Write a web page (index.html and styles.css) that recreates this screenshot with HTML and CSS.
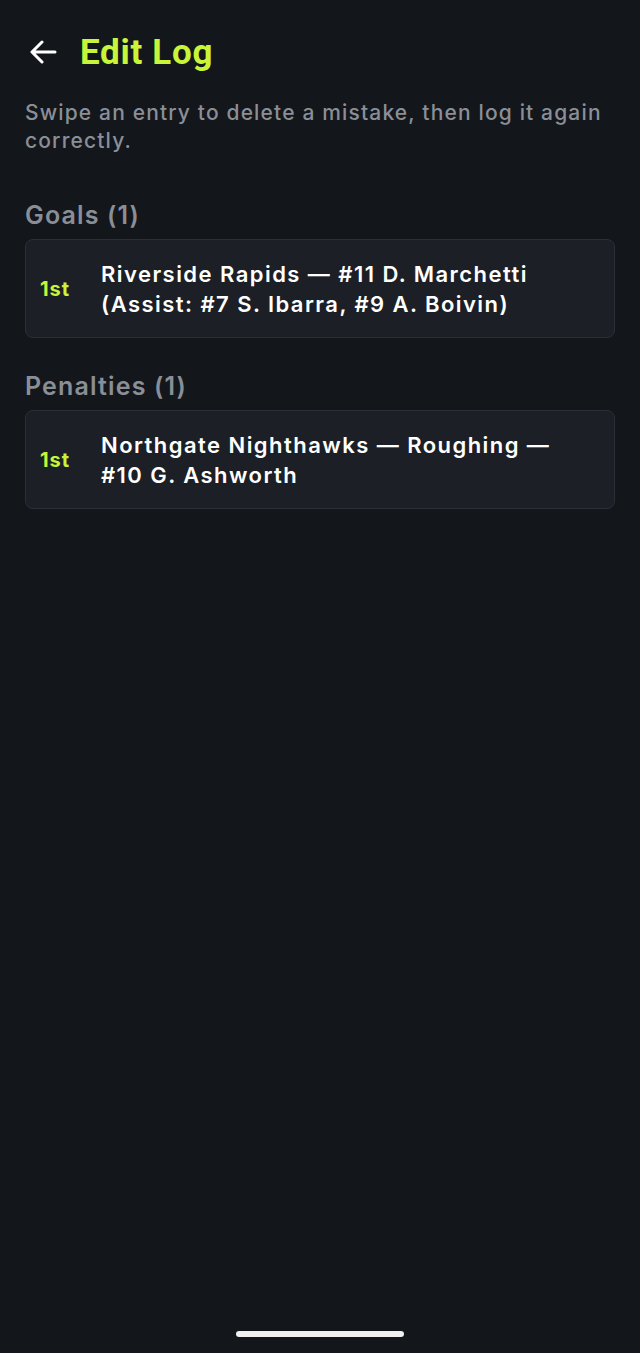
FILE: index.html
```html
<!DOCTYPE html>
<html lang="en">
<head>
<meta charset="utf-8">
<link rel="stylesheet" href="styles.css">
</head>
<body>
<div class="screen">
  <header class="topbar">
    <svg class="back" width="28" height="24" viewBox="0 0 28 24" aria-hidden="true">
      <path d="M26 12H3M13 2L3 12l10 10" fill="none" stroke="#ffffff" stroke-width="3" stroke-linecap="round" stroke-linejoin="round"/>
    </svg>
    <h1 class="title">Edit Log</h1>
  </header>
  <p class="hint">Swipe an entry to delete a mistake, then log it again correctly.</p>

  <section class="group">
    <h2 class="group-title">Goals (1)</h2>
    <div class="card">
      <span class="period">1st</span>
      <span class="entry">Riverside Rapids — #11 D. Marchetti (Assist: #7 S. Ibarra, #9 A. Boivin)</span>
    </div>
  </section>

  <section class="group">
    <h2 class="group-title">Penalties (1)</h2>
    <div class="card">
      <span class="period">1st</span>
      <span class="entry">Northgate Nighthawks — Roughing — #10 G. Ashworth</span>
    </div>
  </section>

  <div class="spacer"></div>
  <div class="home-bar"></div>
</div>
</body>
</html>
```

FILE: styles.css
```css
html, body {
  margin: 0;
  padding: 0;
  background: #13161b;
}
.screen {
  width: 640px;
  height: 1353px;
  box-sizing: border-box;
  padding: 30px 25px 0 25px;
  display: flex;
  flex-direction: column;
  font-family: "Inter", "Noto Sans", sans-serif;
  color: #ffffff;
}
.topbar {
  display: flex;
  align-items: center;
  gap: 23px;
  height: 44px;
  padding-left: 4px;
}
.back {
  display: block;
  flex: none;
}
.title {
  margin: 0;
  font-family: "Roboto", sans-serif;
  font-weight: 700;
  font-size: 35px;
  color: #c8f43a;
  letter-spacing: 0.7px;
}
.hint {
  margin: 25px 0 0 0;
  font-size: 21px;
  line-height: 28px;
  font-weight: 500;
  letter-spacing: 1.15px;
  color: #8a8f97;
}
.group {
  margin-top: 45px;
}
.group + .group {
  margin-top: 33px;
}
.group-title {
  margin: 0 0 9px 0;
  font-size: 25px;
  font-weight: 600;
  line-height: 30px;
  letter-spacing: 1.15px;
  color: #8a8f97;
}
.card {
  display: flex;
  align-items: center;
  min-height: 99px;
  box-sizing: border-box;
  padding: 18px 40px 18px 14px;
  background: #1c1f26;
  border: 1px solid #2b2f36;
  border-radius: 8px;
}
.period {
  flex: none;
  width: 61px;
  font-size: 20px;
  font-weight: 700;
  letter-spacing: 1px;
  color: #c8f43a;
}
.entry {
  font-size: 22px;
  font-weight: 600;
  line-height: 30px;
  letter-spacing: 1.45px;
  color: #ffffff;
}
.spacer {
  flex: 1;
}
.home-bar {
  align-self: center;
  width: 168px;
  height: 6px;
  border-radius: 3px;
  background: #f0f0ee;
  margin-bottom: 16px;
}
```
